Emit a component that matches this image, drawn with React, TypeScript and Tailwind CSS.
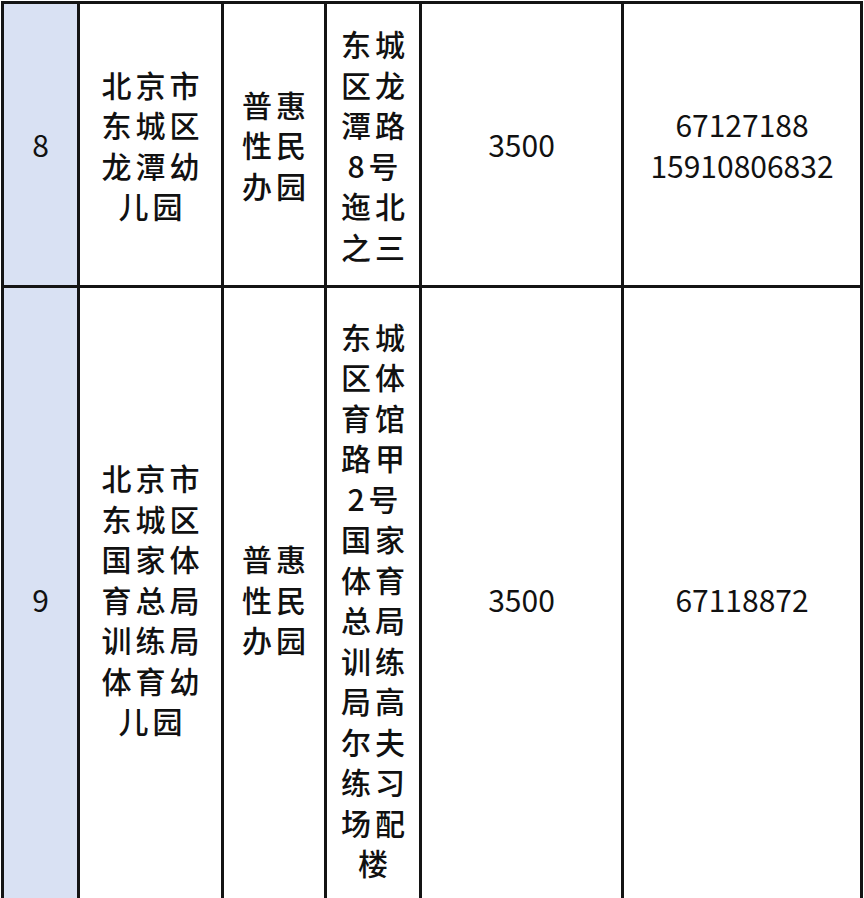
const FONT = "font-['Noto_Sans_CJK_SC','Noto_Sans',sans-serif]";

type Row = {
  no: string;
  name: string[];
  kind: string[];
  address: string[];
  fee: string;
  phones: string[];
  height: string;
};

const rows: Row[] = [
  {
    no: "8",
    name: ["北京市", "东城区", "龙潭幼", "儿园"],
    kind: ["普惠", "性民", "办园"],
    address: ["东城", "区龙", "潭路", "8号", "迤北", "之三"],
    fee: "3500",
    phones: ["67127188", "15910806832"],
    height: "h-[284px]",
  },
  {
    no: "9",
    name: ["北京市", "东城区", "国家体", "育总局", "训练局", "体育幼", "儿园"],
    kind: ["普惠", "性民", "办园"],
    address: [
      "东城", "区体", "育馆", "路甲", "2号", "国家", "体育",
      "总局", "训练", "局高", "尔夫", "练习", "场配", "楼",
    ],
    fee: "3500",
    phones: ["67118872"],
    height: "h-[625px]",
  },
];

function Lines({ items, cjk }: { items: string[]; cjk?: boolean }) {
  return (
    <div className={cjk ? "pl-[4px] tracking-[4px] font-medium" : ""}>
      {items.map((t, i) => (
        <div key={i} className="whitespace-nowrap">{t}</div>
      ))}
    </div>
  );
}

const cell = "flex items-center justify-center text-center border-r-[3px] border-b-[3px] border-[#141414] shrink-0";

export default function App() {
  return (
    <div className={`h-[898px] w-[864px] overflow-hidden bg-white ${FONT}`}>
      <div className="ml-[1px] mt-[1px] w-[862px] border-l-[3px] border-t-[3px] border-[#141414] text-[30px] leading-[40.5px] text-[#111111]">
        {rows.map(r => (
          <div key={r.no} className={`flex ${r.height}`}>
            <div className={`${cell} w-[76px] bg-[#d9e1f3]`}>{r.no}</div>
            <div className={`${cell} w-[144px]`}><Lines items={r.name} cjk /></div>
            <div className={`${cell} w-[103px]`}><Lines items={r.kind} cjk /></div>
            <div className={`${cell} w-[95px]`}><Lines items={r.address} cjk /></div>
            <div className={`${cell} w-[202px]`}>{r.fee}</div>
            <div className={`${cell} w-[239px]`}><Lines items={r.phones} /></div>
          </div>
        ))}
      </div>
    </div>
  );
}
